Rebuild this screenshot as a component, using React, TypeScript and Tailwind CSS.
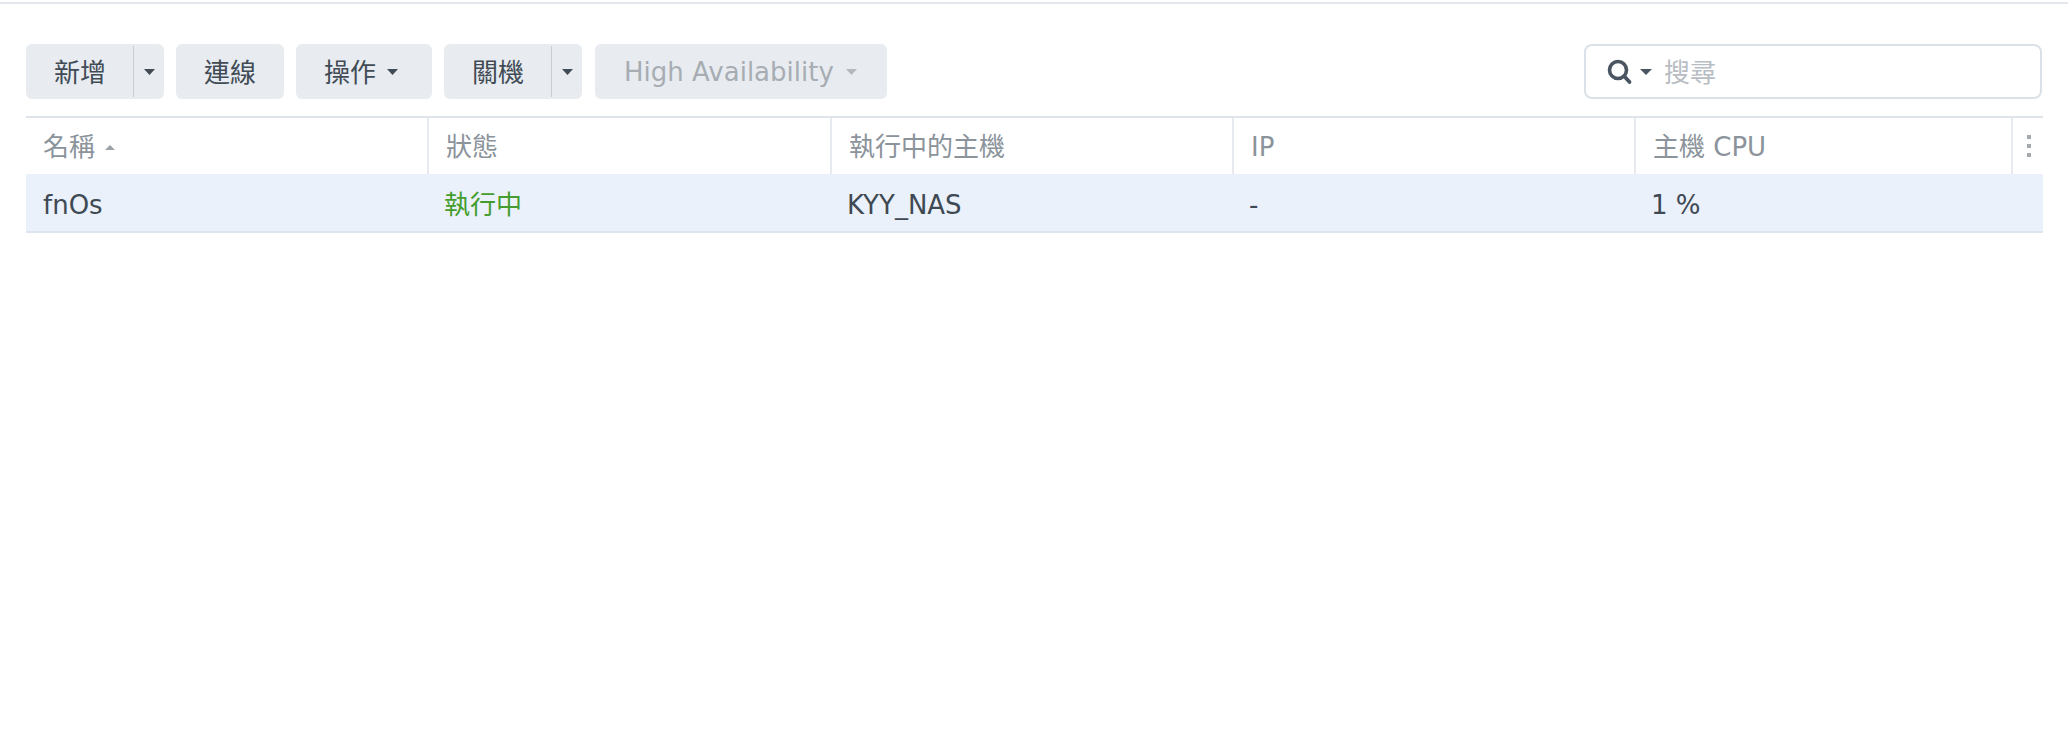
import React from "react";

const Caret = ({ className = "" }: { className?: string }) => (
  <svg width="11" height="6" viewBox="0 0 11 6" className={className}>
    <path d="M0 0h11L5.5 6z" fill="currentColor" />
  </svg>
);

const btn =
  "h-full flex items-center rounded-[6px] bg-[#e8ecf0] text-[#414b55]";

function SplitButton({ label }: { label: string }) {
  return (
    <div className={btn}>
      <span className="pl-[28px] pr-[27px] pt-[3px]">{label}</span>
      <div className="w-px h-[51px] bg-[#c5ccd4]" />
      <span className="w-[30px] flex justify-center">
        <Caret />
      </span>
    </div>
  );
}

const columns = [
  { title: "名稱", value: "fnOs", sort: true },
  { title: "狀態", value: "執行中", green: true },
  { title: "執行中的主機", value: "KYY_NAS" },
  { title: "IP", value: "-" },
  { title: "主機 CPU", value: "1 %" },
];

export default function App() {
  return (
    <div className="w-[2068px] h-[754px] bg-white text-[26px] font-['DejaVu_Sans','Noto_Sans_CJK_TC',sans-serif] overflow-hidden">
      <div className="h-[2px]" />
      <div className="h-[2px] bg-[#e3e7ed]" />

      <div className="px-[26px] pt-[40px]">
        {/* toolbar */}
        <div className="flex h-[55px] gap-[12px]">
          <SplitButton label="新增" />
          <div className={`${btn} px-[28px] pt-[3px]`}>連線</div>
          <div className={`${btn} pl-[28px] pr-[34px] gap-[11px]`}>
            <span className="pt-[3px]">操作</span>
            <Caret />
          </div>
          <SplitButton label="關機" />
          <div className="h-full flex items-center gap-[12px] ml-[1px] pl-[29px] pr-[30px] rounded-[6px] bg-[#e8ecf0] text-[#a7adb3]">
            <span className="pt-[2px]">High Availability</span>
            <Caret className="text-[#b4b9bf]" />
          </div>
          <div className="ml-auto w-[458px] h-full flex items-center border-2 border-[#dbe1e8] rounded-[8px] pl-[20px]">
            <svg width="28" height="28" viewBox="0 0 28 28" className="text-[#4a5561]">
              <circle cx="12" cy="12" r="8.5" fill="none" stroke="currentColor" strokeWidth="3.6" />
              <path d="M18.5 18.5l5 5.5" stroke="currentColor" strokeWidth="3.8" strokeLinecap="round" />
            </svg>
            <svg width="12" height="6" viewBox="0 0 12 6" className="ml-[6px] text-[#4a5561]">
              <path d="M0 0h12L6 6z" fill="currentColor" />
            </svg>
            <span className="ml-[12px] pt-[3px] text-[#b8bdc3]">搜尋</span>
          </div>
        </div>

        {/* table */}
        <div className="mt-[17px] w-[2017px] border-t-2 border-[#dfe4eb]">
          <div className="grid grid-cols-[401px_403px_402px_402px_377px_1fr] h-[56px] text-[#8b939b]">
            {columns.map((c, i) => (
              <div
                key={c.title}
                className={`flex items-center pl-[17px] pt-[2px] gap-[10px] ${i > 0 ? "border-l-2 border-[#e7ebf0]" : ""}`}
              >
                {c.title}
                {c.sort && (
                  <svg width="10" height="5" viewBox="0 0 10 5" className="text-[#9ca2a8]">
                    <path d="M0 5h10L5 0z" fill="currentColor" />
                  </svg>
                )}
              </div>
            ))}
            <div className="flex items-center justify-center border-l-2 border-[#e7ebf0]">
              <div className="flex flex-col gap-[5px] pl-[1px]">
                <span className="w-[4px] h-[4px] bg-[#a3a9af]" />
                <span className="w-[4px] h-[4px] bg-[#a3a9af]" />
                <span className="w-[4px] h-[4px] bg-[#a3a9af]" />
              </div>
            </div>
          </div>
          <div className="grid grid-cols-[401px_403px_402px_402px_377px_1fr] h-[59px] bg-[#eaf1fb] border-b-2 border-[#dde5f0] text-[#3f4953]">
            {columns.map((c) => (
              <div
                key={c.title}
                className={`flex items-center pl-[17px] pt-[5px] ${c.green ? "text-[#449d2c]" : ""}`}
              >
                {c.value}
              </div>
            ))}
            <div />
          </div>
        </div>
      </div>
    </div>
  );
}
